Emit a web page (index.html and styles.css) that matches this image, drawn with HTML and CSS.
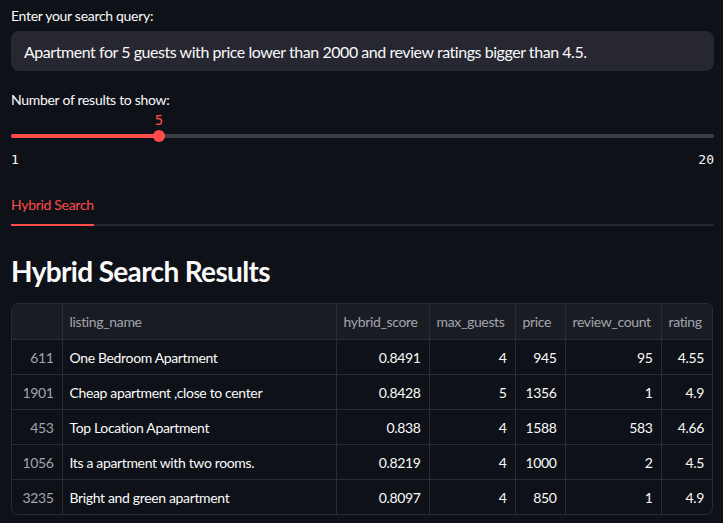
FILE: index.html
```html
<!DOCTYPE html>
<html>
<head>
<meta charset="utf-8">
<link rel="stylesheet" href="styles.css">
</head>
<body>
<main class="app">
  <label class="field-label">Enter your search query:</label>
  <div class="text-input">Apartment for 5 guests with price lower than 2000 and review ratings bigger than 4.5.</div>

  <label class="field-label slider-label">Number of results to show:</label>
  <div class="slider">
    <div class="track">
      <div class="fill" style="width: 21.05%"></div>
      <div class="thumb" style="left: 21.05%"><span class="thumb-value">5</span></div>
    </div>
    <div class="ticks"><span>1</span><span>20</span></div>
  </div>

  <div class="tabs">
    <div class="tab active">Hybrid Search</div>
  </div>

  <h2 class="results-title">Hybrid Search Results</h2>

  <div class="table-wrap">
    <table class="grid">
      <colgroup>
        <col class="c-idx"><col class="c-name"><col class="c-score"><col class="c-guests"><col class="c-price"><col class="c-count"><col class="c-rating">
      </colgroup>
      <thead>
        <tr><th></th><th>listing_name</th><th>hybrid_score</th><th>max_guests</th><th>price</th><th>review_count</th><th>rating</th></tr>
      </thead>
      <tbody>
        <tr><td class="idx">611</td><td>One Bedroom Apartment</td><td class="num">0.8491</td><td class="num">4</td><td class="num">945</td><td class="num">95</td><td class="num">4.55</td></tr>
        <tr><td class="idx">1901</td><td>Cheap apartment ,close to center</td><td class="num">0.8428</td><td class="num">5</td><td class="num">1356</td><td class="num">1</td><td class="num">4.9</td></tr>
        <tr><td class="idx">453</td><td>Top Location Apartment</td><td class="num">0.838</td><td class="num">4</td><td class="num">1588</td><td class="num">583</td><td class="num">4.66</td></tr>
        <tr><td class="idx">1056</td><td>Its a apartment with two rooms.</td><td class="num">0.8219</td><td class="num">4</td><td class="num">1000</td><td class="num">2</td><td class="num">4.5</td></tr>
        <tr><td class="idx">3235</td><td>Bright and green apartment</td><td class="num">0.8097</td><td class="num">4</td><td class="num">850</td><td class="num">1</td><td class="num">4.9</td></tr>
      </tbody>
    </table>
  </div>
</main>
</body>
</html>
```
FILE: styles.css
```css
html, body {
  margin: 0;
  padding: 0;
  background: #0e1117;
}
body {
  font-family: "Lato", "Open Sans", sans-serif;
  color: #fafafa;
  width: 723px;
  height: 523px;
  overflow: hidden;
}
.app {
  padding: 6px 9px 0 11px;
  display: flex;
  flex-direction: column;
}
.field-label {
  display: block;
  font-size: 14px;
  line-height: 20px;
  height: 20px;
  letter-spacing: -0.3px;
  color: #fafafa;
  margin-bottom: 5px;
}
.text-input {
  height: 40px;
  box-sizing: border-box;
  background: #262730;
  border-radius: 8px;
  padding: 0 13px;
  font-size: 16px;
  line-height: 41px;
  letter-spacing: -0.45px;
  color: #fafafa;
  white-space: nowrap;
}
.slider-label {
  margin-top: 19px;
  margin-bottom: 0;
}
.slider {
  padding-top: 24px;
}
.track {
  position: relative;
  height: 4px;
  border-radius: 2px;
  background: #3b3d46;
}
.fill {
  height: 4px;
  border-radius: 2px;
  background: #ff4b4b;
}
.thumb {
  position: absolute;
  top: -4px;
  width: 12px;
  height: 12px;
  margin-left: -6px;
  border-radius: 50%;
  background: #ff4b4b;
}
.thumb-value {
  position: absolute;
  left: 50%;
  bottom: 14px;
  transform: translateX(-50%);
  font-size: 14px;
  line-height: 16px;
  color: #ff4b4b;
  font-family: "DejaVu Sans Mono", monospace;
}
.ticks {
  display: flex;
  justify-content: space-between;
  margin-top: 12px;
  font-family: "DejaVu Sans Mono", "Liberation Mono", monospace;
  font-size: 13px;
  line-height: 20px;
  color: #fafafa;
}
.tabs {
  margin-top: 25px;
  display: flex;
  border-bottom: 2px solid #262730;
}
.tab {
  font-size: 14px;
  line-height: 20px;
  letter-spacing: -0.3px;
  padding-bottom: 9px;
  margin-bottom: -2px;
}
.tab.active {
  color: #ff4b4b;
  border-bottom: 2px solid #ff4b4b;
}
.results-title {
  margin: 27px 0 0;
  font-size: 28px;
  line-height: 36px;
  font-weight: 700;
  letter-spacing: -0.65px;
  color: #fafafa;
}
.table-wrap {
  margin-top: 14px;
  width: 700px;
  border: 1px solid #2b2d35;
  border-radius: 7px;
  overflow: hidden;
}
.grid {
  width: 100%;
  border-collapse: collapse;
  table-layout: fixed;
  font-size: 14px;
  letter-spacing: -0.35px;
}
.c-idx { width: 50px; }
.c-name { width: 274px; }
.c-score { width: 93px; }
.c-guests { width: 86px; }
.c-price { width: 50px; }
.c-count { width: 96px; }
.c-rating { width: 51px; }
.grid th, .grid td {
  border: 1px solid #2b2d35;
  padding: 0 8px 0 7px;
  white-space: nowrap;
  overflow: hidden;
}
.grid tr:first-child th { border-top: none; }
.grid tr th:first-child, .grid tr td:first-child { border-left: none; }
.grid tr th:last-child, .grid tr td:last-child { border-right: none; }
.grid tbody tr:last-child td { border-bottom: none; }
.grid th {
  height: 35px;
  background: #1a1c24;
  color: #a3a5ab;
  font-weight: 400;
  text-align: left;
}
.grid td {
  height: 34px;
  color: #fafafa;
}
.grid td.num, .grid td.idx {
  text-align: right;
}
.grid td.idx {
  color: #a3a5ab;
}
```
